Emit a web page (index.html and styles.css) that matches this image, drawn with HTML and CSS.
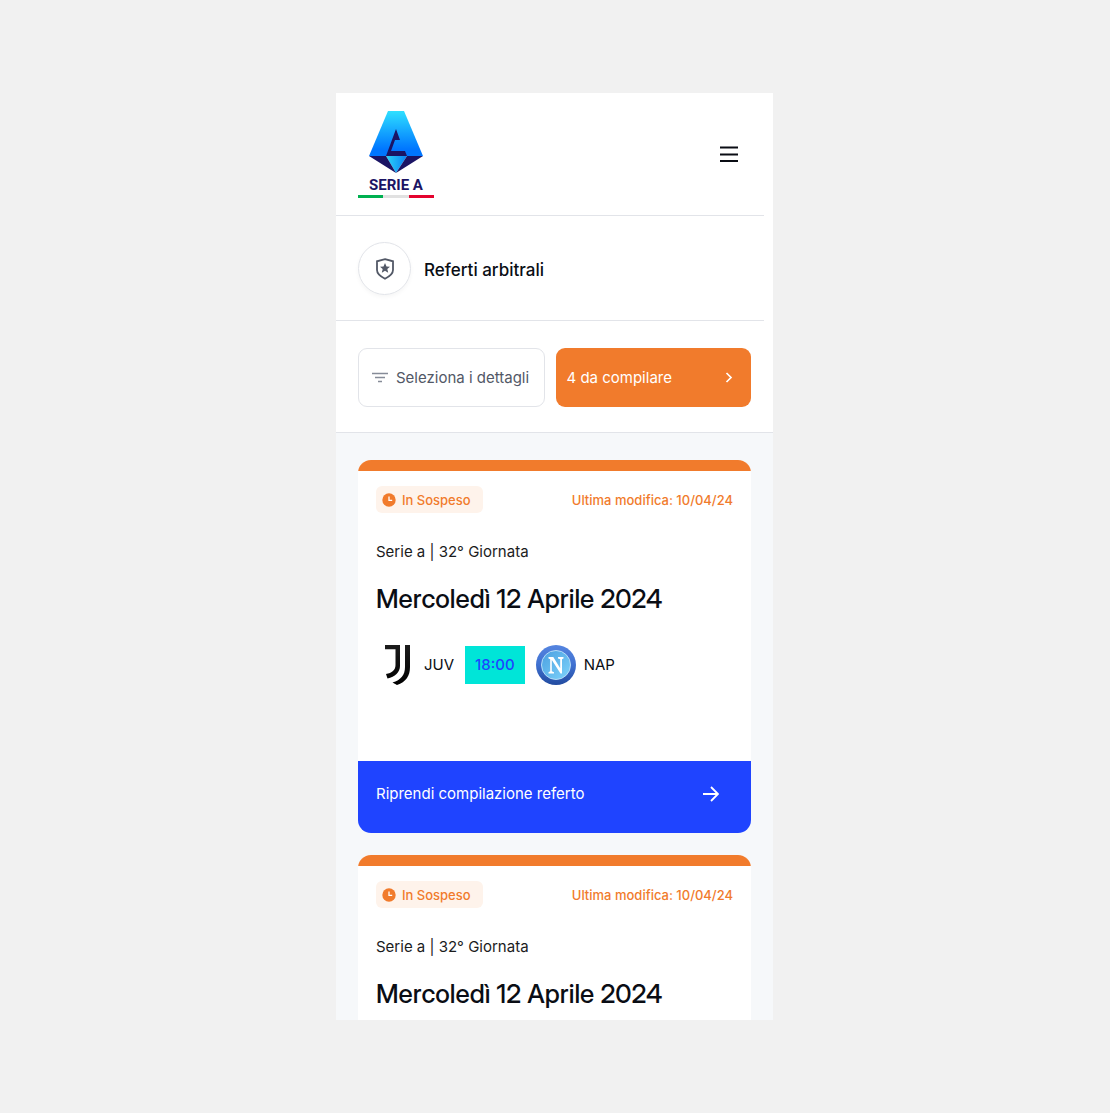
FILE: index.html
```html
<!DOCTYPE html>
<html lang="it">
<head>
<meta charset="utf-8">
<meta name="viewport" content="width=device-width, initial-scale=1">
<title>Referti arbitrali</title>
<link rel="stylesheet" href="styles.css">
</head>
<body>
<svg class="defs" aria-hidden="true">
  <defs>
    <linearGradient id="juve" x1="0" y1="0" x2="0" y2="1"><stop offset="0" stop-color="#1c1c1c"/><stop offset="1" stop-color="#000"/></linearGradient>
    <linearGradient id="ring" x1="0" y1="0" x2="0" y2="1"><stop offset="0" stop-color="#5585e0"/><stop offset=".5" stop-color="#3f70d0"/><stop offset="1" stop-color="#224ba0"/></linearGradient>
    <linearGradient id="disc" x1="0" y1="0" x2="1" y2="1"><stop offset="0" stop-color="#4a9fe0"/><stop offset="1" stop-color="#7ed4fb"/></linearGradient>
    <symbol id="clock" viewBox="0 0 14 14"><circle cx="7" cy="7" r="6.7" fill="#f17b2c"/><path d="M7 3.6V7.4H10.2" fill="none" stroke="#fff" stroke-width="1.3"/></symbol>
    <symbol id="juv" viewBox="0 0 40 40"><path d="M9 0H24V21C24 27 19 32 11.500 33.500L10 29C16 28 19.500 25 19.500 20V4.300H9ZM29 0H34V22C34 31 30 37 21 40L16.500 37.500C25 35 29 30 29 22Z" fill="url(#juve)"/></symbol>
    <symbol id="nap" viewBox="0 0 40 40"><circle cx="20" cy="20" r="20" fill="url(#ring)"/><circle cx="20" cy="20" r="14.500" fill="url(#disc)" stroke="#b5dcf7" stroke-width="1"/><path d="M12.500 12H17.300L24.200 23.300V14.200L22 13.400V12H27.500V13.400L26 14.200V28.500H24.500L15.800 15V26.300L18 27.200V28.500H12.500V27.200L14.200 26.300V14.200L12.500 13.400Z" fill="#fff"/></symbol>
    <symbol id="arrow" viewBox="0 0 16 16"><path d="M0 8H15M8 1L15 8L8 15" fill="none" stroke="#fff" stroke-width="1.800"/></symbol>
  </defs>
</svg>
<div class="app">
  <header class="header">
    <a class="logo" href="#" aria-label="Serie A">
      <svg width="76" height="89" viewBox="0 0 76 89">
        <defs>
          <linearGradient id="blue" x1="0" y1="0" x2="0" y2="1"><stop offset="0" stop-color="#2fe0ff"/><stop offset=".5" stop-color="#12a0ff"/><stop offset=".85" stop-color="#0076ff"/></linearGradient>
          <linearGradient id="gem" x1="0" y1="0" x2="1" y2="0"><stop offset="0" stop-color="#2bd4fa"/><stop offset="1" stop-color="#0a80f5"/></linearGradient>
        </defs>
        <path d="M30 1H46L65 46H11Z" fill="url(#blue)"/>
        <path d="M38 19L42 30H37L33 41H47L49 46H28Z" fill="#1b1464"/>
        <path d="M28 46H49L38 63Z" fill="url(#gem)"/>
        <path d="M11 46L38 63L28 46ZM65 46L38 63L49 46Z" fill="#1b1464"/>
        <text class="logo-text" x="38" y="80" text-anchor="middle">SERIE A</text>
        <path d="M0 85H25V88H0Z" fill="#00b050"/><path d="M25 85H51V88H25Z" fill="#e1e1e1"/><path d="M51 85H76V88H51Z" fill="#e4032e"/>
      </svg>
    </a>
    <button class="menu" type="button" aria-label="Menu">
      <svg width="18" height="16" viewBox="0 0 18 16"><path d="M0 1.500H18M0 8.500H18M0 15H18" stroke="#0a0d14" stroke-width="1.800"/></svg>
    </button>
  </header>
  <section class="heading">
    <span class="heading-icon">
      <svg width="18" height="22" viewBox="0 0 18 22"><path d="M9 1.200L17 3.300V12C17 16 13.500 18.500 9 20.700C4.500 18.500 1 16 1 12V3.300Z" fill="none" stroke="#525866" stroke-width="1.800"/><path d="M9 5L10.500 8.500L14 8.800L11.300 11.100L12.200 14.700L9 12.800L5.800 14.700L6.700 11.100L4 8.800L7.500 8.500Z" fill="#525866"/></svg>
    </span>
    <h1>Referti arbitrali</h1>
  </section>
  <div class="toolbar">
    <button class="filter" type="button">
      <svg width="16" height="12" viewBox="0 0 16 12"><path d="M0 1.500H16M3 5.500H13M6 9.500H10" stroke="#868c98" stroke-width="1.500"/></svg>
      Seleziona i dettagli
    </button>
    <button class="pending" type="button">
      4 da compilare
      <svg width="8" height="12" viewBox="0 0 8 12"><path d="M1.500 1L6 5.500L1.500 10" fill="none" stroke="#fff" stroke-width="1.700"/></svg>
    </button>
  </div>
  <main class="list">
    <article class="card">
      <div class="card-body">
        <div class="status">
          <span class="badge"><svg width="14" height="14"><use href="#clock"/></svg>In Sospeso</span>
          <span class="modified">Ultima modifica: 10/04/24</span>
        </div>
        <p class="round">Serie a | 32° Giornata</p>
        <h2>Mercoledì 12 Aprile 2024</h2>
        <div class="match">
          <span class="team"><svg width="40" height="40"><use href="#juv"/></svg>JUV</span>
          <time class="time">18:00</time>
          <span class="team"><svg width="40" height="40"><use href="#nap"/></svg>NAP</span>
        </div>
      </div>
      <a class="resume" href="#">Riprendi compilazione referto<svg width="16" height="16"><use href="#arrow"/></svg></a>
    </article>
    <article class="card">
      <div class="card-body">
        <div class="status">
          <span class="badge"><svg width="14" height="14"><use href="#clock"/></svg>In Sospeso</span>
          <span class="modified">Ultima modifica: 10/04/24</span>
        </div>
        <p class="round">Serie a | 32° Giornata</p>
        <h2>Mercoledì 12 Aprile 2024</h2>
      </div>
    </article>
  </main>
</div>
</body>
</html>
```
FILE: styles.css
```css
* { box-sizing: border-box; }

body {
  margin: 0;
  padding: 93px 17px 93px 16px;
  background: #f1f1f1;
  color: #0a0d14;
  font: 400 15px/22px Inter, "Liberation Sans", sans-serif;
}

button { font: inherit; cursor: pointer; }
a { color: inherit; text-decoration: none; }
h1, h2, p { margin: 0; }
svg { flex: none; display: block; }
.defs { position: absolute; width: 0; height: 0; }

.app {
  max-width: 437px;
  height: calc(100vh - 186px);
  margin: 0 auto;
  overflow: hidden;
  background: #fff;
}

.header {
  display: flex;
  align-items: center;
  justify-content: space-between;
  margin-right: 9px;
  padding: 17px 26px 16px 22px;
  border-bottom: 1px solid #e2e4e9;
}
.logo-text { font: 700 15px Roboto, sans-serif; fill: #1b1464; }
.menu { padding: 0 0 2px; border: 0; background: none; }

.heading {
  display: flex;
  align-items: center;
  gap: 13px;
  margin-right: 9px;
  padding: 26px 22px 25px;
  border-bottom: 1px solid #e2e4e9;
}
.heading-icon {
  display: grid;
  place-items: center;
  width: 53px;
  height: 53px;
  border: 1px solid #e2e4e9;
  border-radius: 50%;
  box-shadow: 0 2px 4px #1b1c1d0a;
}
h1 { padding-top: 2px; font-size: 17px; font-weight: 500; line-height: 26px; }

.toolbar {
  display: grid;
  grid-template-columns: 187fr 196fr;
  gap: 11px;
  padding: 27px 22px 25px;
  border-bottom: 1px solid #e2e4e9;
}
.toolbar button {
  display: flex;
  align-items: center;
  height: 59px;
  border-radius: 9px;
  white-space: nowrap;
}
.filter {
  gap: 8px;
  padding: 0 13px;
  border: 1px solid #e2e4e9;
  background: #fff;
  color: #525866;
}
.pending {
  justify-content: space-between;
  padding: 0 18px 0 11px;
  border: 0;
  background: #f17b2c;
  color: #fff;
}

.list {
  display: grid;
  gap: 22px;
  padding: 27px 22px;
  background: #f6f8fa;
}
.card {
  overflow: hidden;
  border-radius: 13px;
  background: #fff;
}
.card-body {
  padding: 15px 18px 76px;
  border-top: 11px solid #f17b2c;
}
.status {
  display: flex;
  align-items: center;
  justify-content: space-between;
  font-size: 13px;
  font-weight: 500;
  color: #f17b2c;
}
.badge {
  display: flex;
  align-items: center;
  gap: 6px;
  height: 27px;
  padding: 0 12px 0 6px;
  border-radius: 6px;
  background: #fef3eb;
}
.round { margin-top: 28px; color: #1b1c1d; }
h2 {
  margin-top: 18px;
  font-family: "Inter Display", Inter, "Liberation Sans", sans-serif;
  font-size: 26px;
  font-variation-settings: "opsz" 32;
  font-weight: 500;
  line-height: 36px;
}
.match {
  display: flex;
  align-items: center;
  gap: 11px;
  margin-top: 28px;
}
.team { display: flex; align-items: center; gap: 8px; }
.time {
  padding: 8px 10px;
  background: #00e5d8;
  color: #1f44ff;
  font-weight: 500;
}
.resume {
  display: flex;
  align-items: center;
  justify-content: space-between;
  height: 72px;
  padding: 0 32px 6px 18px;
  background: #1f44ff;
  color: #fff;
}
```
